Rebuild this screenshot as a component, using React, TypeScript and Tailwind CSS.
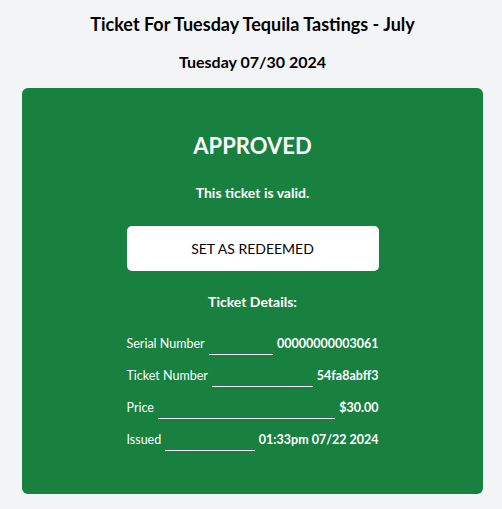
export default function App() {
  const rows: [string, string][] = [
    ["Serial Number", "00000000003061"],
    ["Ticket Number", "54fa8abff3"],
    ["Price", "$30.00"],
    ["Issued", "01:33pm 07/22 2024"],
  ];
  return (
    <div className="min-h-[509px] bg-[#f3f4f6] pl-[22px] pr-[19px] pt-[12px] pb-[16px] text-black" style={{ fontFamily: "Lato, 'Noto Sans', sans-serif" }}>
      <h1 className="text-center text-[18px] font-bold leading-[24px]">Ticket For Tuesday Tequila Tastings - July</h1>
      <h2 className="mt-[14px] text-center text-[16px] font-bold leading-[24px]">Tuesday 07/30 2024</h2>
      <div className="mt-[14px] rounded-[6px] bg-[#18813f] pt-[44px] pb-[45px] text-white">
        <div className="text-center text-[22px] font-bold leading-[28px]">APPROVED</div>
        <div className="mt-[23px] text-center text-[14px] font-bold leading-[20px]">This ticket is valid.</div>
        <div className="mt-[23px] flex justify-center">
          <button className="h-[45px] w-[252px] rounded-[5px] bg-white text-[14px] text-black">SET AS REDEEMED</button>
        </div>
        <div className="mt-[21px] text-center text-[14px] font-bold leading-[20px]">Ticket Details:</div>
        <div className="mx-auto mt-[23px] flex w-[252px] flex-col gap-[14px]">
          {rows.map(([k, v]) => (
            <div key={k} className="flex items-end text-[12.5px] leading-[18px]">
              <span>{k}</span>
              <span className="mx-[4px] mb-[-2px] flex-1 border-b border-white"></span>
              <span className="font-bold">{v}</span>
            </div>
          ))}
        </div>
      </div>
    </div>
  );
}
